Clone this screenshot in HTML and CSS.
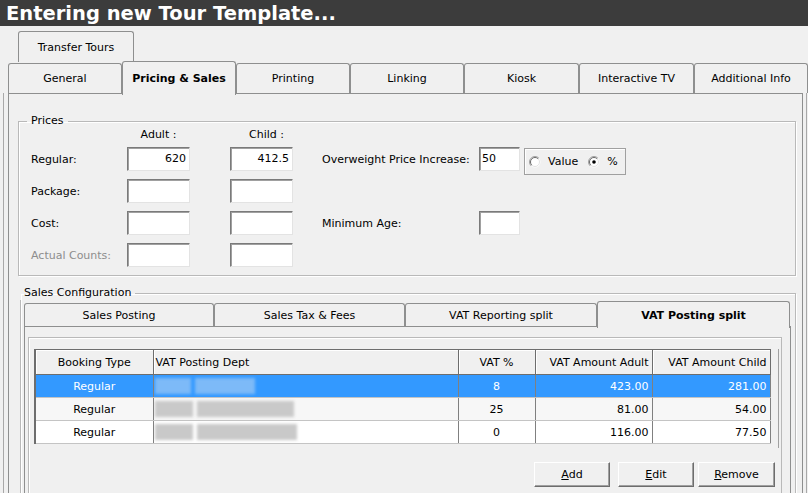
FILE: index.html
```html
<!DOCTYPE html>
<html>
<head>
<meta charset="utf-8">
<title>Entering new Tour Template</title>
<link rel="stylesheet" href="styles.css">
</head>
<body>
<div class="title">Entering new Tour Template...</div>
<div class="toptabs"><div class="tab">Transfer Tours</div></div>
<div class="maintabs">
  <div class="tab">General</div>
  <div class="tab sel">Pricing &amp; Sales</div>
  <div class="tab">Printing</div>
  <div class="tab">Linking</div>
  <div class="tab w115">Kiosk</div>
  <div class="tab w115">Interactive TV</div>
  <div class="tab">Additional Info</div>
</div>
<div class="frame">
<div class="panel">
  <fieldset class="grp prices">
    <legend>Prices</legend>
    <div class="hdr"><span class="lbl"></span><span class="colh">Adult :</span><span class="colh child">Child :</span></div>
    <div class="prow">
      <span class="lbl">Regular:</span>
      <div class="inp num">620</div>
      <div class="inp num gap">412.5</div>
      <span class="lbl2">Overweight Price Increase:</span>
      <div class="inp small">50</div>
      <div class="radios">
        <span class="radio">
          <svg width="12" height="12" viewBox="0 0 12 12"><circle cx="6" cy="6" r="5.5" fill="#fff"/><path d="M2.1 9.9 A5.5 5.5 0 0 1 9.9 2.1" stroke="#a0a0a0" fill="none"/><path d="M2.8 9.2 A4.5 4.5 0 0 1 9.2 2.8" stroke="#696969" fill="none"/><path d="M9.2 2.8 A4.5 4.5 0 0 1 2.8 9.2" stroke="#e3e3e3" fill="none"/></svg>
          Value
        </span>
        <span class="radio">
          <svg width="12" height="12" viewBox="0 0 12 12"><circle cx="6" cy="6" r="5.5" fill="#fff"/><path d="M2.1 9.9 A5.5 5.5 0 0 1 9.9 2.1" stroke="#a0a0a0" fill="none"/><path d="M2.8 9.2 A4.5 4.5 0 0 1 9.2 2.8" stroke="#696969" fill="none"/><path d="M9.2 2.8 A4.5 4.5 0 0 1 2.8 9.2" stroke="#e3e3e3" fill="none"/><circle cx="6" cy="6" r="1.8" fill="#000"/></svg>
          %
        </span>
      </div>
    </div>
    <div class="prow">
      <span class="lbl">Package:</span>
      <div class="inp num"></div>
      <div class="inp num gap"></div>
    </div>
    <div class="prow">
      <span class="lbl">Cost:</span>
      <div class="inp num"></div>
      <div class="inp num gap"></div>
      <span class="lbl2">Minimum Age:</span>
      <div class="inp small"></div>
    </div>
    <div class="prow last">
      <span class="lbl dis">Actual Counts:</span>
      <div class="inp num"></div>
      <div class="inp num gap"></div>
    </div>
  </fieldset>

  <fieldset class="grp sales">
    <legend>Sales Configuration</legend>
    <div class="subtabs">
      <div class="tab s1">Sales Posting</div>
      <div class="tab s2">Sales Tax &amp; Fees</div>
      <div class="tab s3">VAT Reporting split</div>
      <div class="tab s4 sel">VAT Posting split</div>
    </div>
    <div class="subpanel">
      <div class="innerbox">
        <div class="gridbox">
          <table class="grid">
            <colgroup>
              <col class="c1"><col class="c2"><col class="c3"><col class="c4"><col class="c5">
            </colgroup>
            <thead>
              <tr>
                <th class="ctr">Booking Type</th>
                <th class="lft">VAT Posting Dept</th>
                <th class="ctr">VAT %</th>
                <th class="rgt">VAT Amount Adult</th>
                <th class="rgt">VAT Amount Child</th>
              </tr>
            </thead>
            <tbody>
              <tr class="selrow">
                <td class="ctr">Regular</td>
                <td class="dept"><span class="blur a1"></span><span class="blur a2"></span></td>
                <td class="ctr">8</td>
                <td class="rgt">423.00</td>
                <td class="rgt">281.00</td>
              </tr>
              <tr class="alt">
                <td class="ctr">Regular</td>
                <td class="dept"><span class="blur b1"></span><span class="blur b2"></span></td>
                <td class="ctr">25</td>
                <td class="rgt">81.00</td>
                <td class="rgt">54.00</td>
              </tr>
              <tr>
                <td class="ctr">Regular</td>
                <td class="dept"><span class="blur b1"></span><span class="blur b3"></span></td>
                <td class="ctr">0</td>
                <td class="rgt">116.00</td>
                <td class="rgt">77.50</td>
              </tr>
            </tbody>
          </table>
        </div>
        <div class="buttons">
          <button class="btn"><u>A</u>dd</button>
          <button class="btn edit"><u>E</u>dit</button>
          <button class="btn remove"><u>R</u>emove</button>
        </div>
      </div>
    </div>
  </fieldset>
</div>
</div>
</body>
</html>
```

FILE: styles.css
```css
html, body {
  margin: 0;
  padding: 0;
}
body {
  width: 808px;
  height: 493px;
  overflow: hidden;
  background: #f0f0f0;
  font-family: "DejaVu Sans", sans-serif;
  font-size: 11px;
  color: #000;
}

.title {
  height: 26px;
  background: #3c3c3c;
  color: #fff;
  font-weight: bold;
  font-size: 19.5px;
  line-height: 27px;
  padding-left: 6px;
  white-space: nowrap;
}

/* tabs */
.tab {
  box-sizing: border-box;
  border: 1px solid #8e8f8f;
  border-bottom: none;
  border-radius: 3px 3px 0 0;
  background: #f0f0f0;
  display: flex;
  align-items: center;
  justify-content: center;
  white-space: nowrap;
  flex: none;
}
.tab.sel {
  font-weight: bold;
  position: relative;
  z-index: 2;
}

.toptabs {
  display: flex;
  margin-top: 5px;
  padding-left: 18px;
  height: 31px;
}
.toptabs .tab {
  width: 116px;
  height: 31px;
}

.maintabs {
  display: flex;
  align-items: flex-end;
  margin-left: 8px;
  height: 31px;
  position: relative;
  z-index: 1;
}
.maintabs .tab {
  width: 114px;
  height: 30px;
}
.maintabs .tab.w115 {
  width: 115px;
}
.maintabs .tab.sel {
  height: 34px;
  margin-bottom: -2px;
}

.frame {
  box-sizing: border-box;
  margin-left: 3px;
  width: 804px;
  height: 400px;
  border-left: 1px solid #a8a8a8;
  border-right: 1px solid #a8a8a8;
  padding-left: 4px;
}
.panel {
  box-sizing: border-box;
  width: 795px;
  height: 400px;
  overflow: hidden;
  border: 1px solid #8e8f8f;
  border-bottom: none;
  padding: 0 6px 0 9px;
}

/* group boxes */
.grp {
  margin: 0;
  min-width: 0;
  border: 1px solid #b9b9b9;
  box-shadow: inset 1px 1px 0 #fff, 1px 1px 0 #fff;
}
.grp legend {
  padding: 0 4px;
  margin-left: -4px;
  line-height: 14px;
}

.prices {
  margin-top: 20px;
  padding: 0 0 8px 12px;
}
.hdr {
  display: flex;
  height: 14px;
  line-height: 14px;
  margin-bottom: 5px;
}
.lbl {
  width: 96px;
  flex: none;
}
.lbl.dis {
  color: #8d8d8d;
}
.colh {
  width: 63px;
  text-align: center;
}
.colh.child {
  margin-left: 40px;
  padding-left: 5px;
}
.prow {
  display: flex;
  align-items: center;
  height: 24px;
  margin-bottom: 8px;
}
.prow.last {
  margin-bottom: 0;
}
.inp {
  box-sizing: border-box;
  flex: none;
  height: 24px;
  background: #fff;
  border: 1px solid;
  border-color: #7a7a7a #e3e3e3 #e3e3e3 #7a7a7a;
  box-shadow: inset 1px 1px 0 #a0a0a0;
  line-height: 22px;
}
.inp.num {
  width: 63px;
  text-align: right;
  padding-right: 3px;
}
.inp.gap {
  margin-left: 40px;
}
.lbl2 {
  margin-left: 29px;
  width: 157px;
  flex: none;
}
.inp.small {
  width: 41px;
  padding-left: 2px;
}
.radios {
  box-sizing: border-box;
  align-self: flex-start;
  margin-top: 1px;
  margin-left: 4px;
  width: 102px;
  height: 27px;
  border: 1px solid #a0a0a0;
  box-shadow: inset 1px 1px 0 #fff;
  display: flex;
  align-items: center;
  padding-left: 4px;
}
.radio {
  display: flex;
  align-items: center;
  gap: 7px;
}
.radio + .radio {
  margin-left: 10px;
}

/* sales configuration */
.sales {
  margin: 10px 0 0 2px;
  padding: 0 4px 0 3px;
}
.subtabs {
  display: flex;
  align-items: flex-end;
  height: 25px;
  margin-top: 1px;
  position: relative;
  z-index: 1;
}
.subtabs .tab {
  height: 23px;
}
.subtabs .tab.sel {
  height: 27px;
  margin-bottom: -2px;
}
.s1 { width: 190px; }
.s2 { width: 191px; }
.s3 { width: 192px; }
.s4 { width: 193px; }

.subpanel {
  box-sizing: border-box;
  width: 767px;
  height: 200px;
  border: 1px solid #8e8f8f;
  padding: 10px 8px 0 3px;
}
.innerbox {
  height: 200px;
  border: 1px solid #b9b9b9;
  box-shadow: inset 1px 1px 0 #fff;
  padding: 11px 2px 0 5px;
}
.gridbox {
  height: 99px;
  border-right: 1px solid #a0a0a0;
}
.grid {
  border-collapse: collapse;
  table-layout: fixed;
  width: 736px;
  border-left: 2px solid #6d6d6d;
  border-top: 1px solid #6d6d6d;
  border-bottom: 1px solid #6d6d6d;
}
.c1 { width: 118px; }
.c2 { width: 305px; }
.c3 { width: 77px; }
.c4 { width: 117px; }
.c5 { width: 118px; }
.grid th {
  height: 24px;
  font-weight: normal;
  background: #f0f0f0;
  border-right: 1px solid #6d6d6d;
  border-bottom: 1px solid #6d6d6d;
  box-shadow: inset 1px 1px 0 #fff;
  padding: 0 3px;
  white-space: nowrap;
  overflow: hidden;
}
.grid td {
  height: 22px;
  padding: 0 3px;
  border-right: 1px solid #808080;
  border-bottom: 1px solid #c4c4c4;
  background: #fff;
  white-space: nowrap;
}
.grid tr.alt td {
  background: #f7f7f7;
}
.grid tr.selrow td {
  background: #3399ff;
  color: #fff;
}
.ctr { text-align: center; }
.lft { text-align: left; }
.rgt { text-align: right; }
.grid th.lft { padding-left: 2px; }
.grid td.dept {
  padding: 0 0 0 1px;
  overflow: hidden;
}
.blur {
  display: inline-block;
  vertical-align: middle;
  height: 16px;
  background: #c9c9c9;
  filter: blur(1.5px);
  margin-right: 4px;
}
.selrow .blur { background: #7dbaf8; }
.a1 { width: 36px; }
.a2 { width: 60px; }
.b1 { width: 38px; }
.b2 { width: 97px; }
.b3 { width: 100px; }

.buttons {
  display: flex;
  justify-content: flex-end;
  margin-top: 14px;
  padding-right: 4px;
}
.btn {
  box-sizing: border-box;
  width: 76px;
  height: 25px;
  margin: 0;
  padding: 0;
  font-family: "DejaVu Sans", sans-serif;
  font-size: 11px;
  color: #000;
  background: #f0f0f0;
  border: 1px solid;
  border-color: #fff #6d6d6d #6d6d6d #fff;
  box-shadow: inset -1px -1px 0 #a0a0a0;
}
.btn.edit { margin-left: 8px; }
.btn.remove { margin-left: 4px; width: 77px; }
```
